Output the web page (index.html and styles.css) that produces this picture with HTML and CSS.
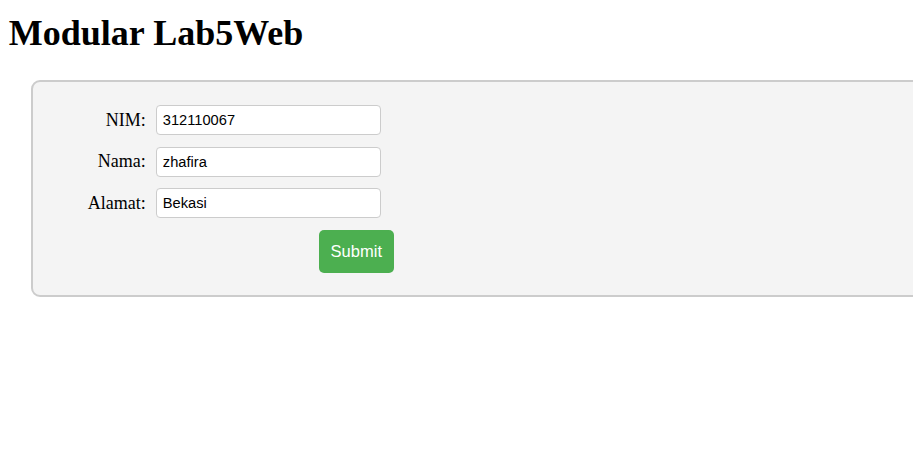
FILE: index.html
```html
<!DOCTYPE html>
<html lang="id">
<head>
<meta charset="utf-8">
<title>Modular Lab5Web</title>
<link rel="stylesheet" href="styles.css">
</head>
<body>
<div class="page">
  <h1 class="title">Modular Lab5Web</h1>
  <div class="panel">
    <form class="form">
      <label class="label" for="nim">NIM:</label>
      <input class="field" id="nim" type="text" value="312110067">
      <label class="label" for="nama">Nama:</label>
      <input class="field" id="nama" type="text" value="zhafira">
      <label class="label" for="alamat">Alamat:</label>
      <input class="field" id="alamat" type="text" value="Bekasi">
      <button class="submit" type="button">Submit</button>
    </form>
  </div>
</div>
</body>
</html>
```
FILE: styles.css
```css
html, body {
  margin: 0;
  padding: 0;
  background: #ffffff;
  overflow-x: hidden;
}
.page {
  padding: 13px 0 0 8.8px;
  font-family: "Liberation Serif", "Times New Roman", serif;
  color: #000;
}
.title {
  margin: 0;
  font-size: 36px;
  font-weight: bold;
  font-family: "Liberation Serif", "Times New Roman", serif;
  line-height: 40px;
}
.panel {
  margin: 27px -120px 0 22px;
  background: #f4f4f4;
  border: 2px solid #cccccc;
  border-radius: 9px;
  padding: 23px 22px 22px 22px;
}
.form {
  display: grid;
  grid-template-columns: 91px 225px;
  column-gap: 10px;
  row-gap: 11.5px;
  align-items: center;
}
.label {
  text-align: right;
  font-size: 18px;
  font-family: "Liberation Serif", "Times New Roman", serif;
}
.field {
  box-sizing: border-box;
  width: 225px;
  height: 30px;
  margin: 0;
  border: 1px solid #cccccc;
  border-radius: 4px;
  padding: 0 6px;
  background: #fff;
  font-family: "Liberation Sans", Arial, sans-serif;
  font-size: 14.67px;
  color: #000;
  outline: none;
}
.submit {
  grid-column: 2;
  justify-self: start;
  margin-left: 163px;
  box-sizing: border-box;
  width: 75px;
  height: 43px;
  padding: 0;
  border: none;
  border-radius: 5px;
  background: #4caf50;
  color: #ffffff;
  font-family: "Liberation Sans", Arial, sans-serif;
  font-size: 16.5px;
  cursor: pointer;
}
```
